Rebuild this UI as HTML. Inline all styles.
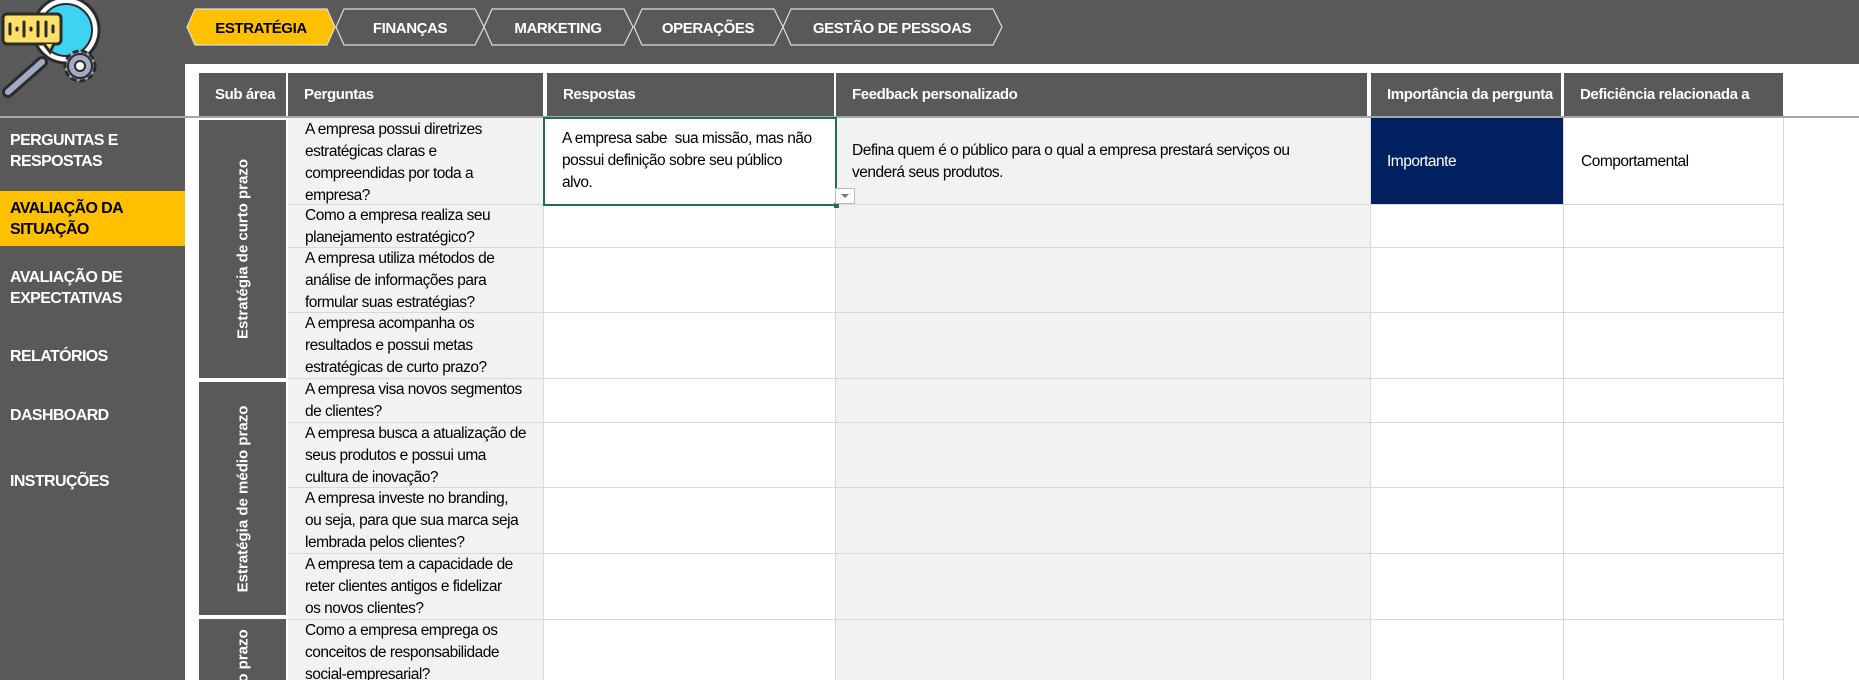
<!DOCTYPE html>
<html style="width:1859px;height:680px;overflow:hidden"><head><meta charset="utf-8"><style>
*{margin:0;padding:0;box-sizing:border-box}
html,body{width:1859px;height:680px;overflow:hidden}
body{background:#595959;position:relative;font-family:"Liberation Sans Narrow","Liberation Sans",sans-serif;}
.a{position:absolute}
.side{color:#fff;font-weight:bold;font-size:16px;line-height:21px;left:10px;font-family:"Liberation Sans",sans-serif;letter-spacing:-0.6px}
.h{background:#595959;color:#fff;font-weight:bold;font-size:15px;top:73px;height:43px;line-height:43px;padding-left:16px;font-family:"Liberation Sans",sans-serif;letter-spacing:-0.4px;white-space:nowrap;overflow:hidden}
.q{font-size:15.5px;line-height:22px;color:#000;font-family:"Liberation Sans",sans-serif;letter-spacing:-0.5px;white-space:nowrap}
.hl{position:absolute;height:1px;background:#d9d9d9}
.vl{position:absolute;width:1px;background:#d9d9d9}
.sub{background:#595959;color:#fff;font-weight:bold;font-size:15px;font-family:"Liberation Sans",sans-serif;overflow:hidden}
.sub span{position:absolute;white-space:nowrap;transform:translate(-50%,-50%) rotate(-90deg);left:50%;top:50%}
</style></head><body>
<svg class="a" style="left:0;top:0" width="110" height="100" viewBox="0 0 110 100">
<line x1="42" y1="62" x2="8" y2="92" stroke="#2b2b2b" stroke-width="12" stroke-linecap="round"/>
<line x1="42" y1="62" x2="8" y2="92" stroke="#a3a9c2" stroke-width="6" stroke-linecap="round"/>
<circle cx="66" cy="30" r="33" fill="#fff" stroke="#2b2b2b" stroke-width="3"/>
<circle cx="66" cy="30" r="26" fill="#3dd3f2" stroke="#2b2b2b" stroke-width="2"/>
<rect x="3" y="14" width="58" height="30" rx="4" fill="#ffe169" stroke="#2b2b2b" stroke-width="3"/>
<path d="M44 44 L50 52 L54 44" fill="#ffe169" stroke="#2b2b2b" stroke-width="3"/>
<g stroke="#2b2b2b" stroke-width="3" stroke-linecap="round"><line x1="10" y1="24" x2="10" y2="34"/><line x1="17" y1="28" x2="17" y2="30"/><line x1="24" y1="22" x2="24" y2="36"/><line x1="31" y1="28" x2="31" y2="30"/><line x1="38" y1="22" x2="38" y2="36"/><line x1="46" y1="22" x2="46" y2="36"/><line x1="53" y1="26" x2="53" y2="32"/></g>
<circle cx="80" cy="66" r="15" fill="#a3a9c2" stroke="#2b2b2b" stroke-width="3" stroke-dasharray="6 3"/>
<circle cx="80" cy="66" r="12" fill="#a3a9c2" stroke="#2b2b2b" stroke-width="2"/>
<circle cx="80" cy="66" r="5" fill="#fff" stroke="#2b2b2b" stroke-width="2"/>
</svg>
<svg class="a" style="left:0;top:0" width="1010" height="60">
<polygon points="195,9 327,9 335,27 327,45 195,45 187,27" fill="#ffc000" stroke="#ddd" stroke-width="1.2"/>
<polygon points="344,9 475,9 484,27 475,45 344,45 336,27" fill="none" stroke="#ddd" stroke-width="1.2"/>
<polygon points="492,9 624,9 633,27 624,45 492,45 484,27" fill="none" stroke="#ddd" stroke-width="1.2"/>
<polygon points="642,9 774,9 783,27 774,45 642,45 634,27" fill="none" stroke="#ddd" stroke-width="1.2"/>
<polygon points="791,9 993,9 1002,27 993,45 791,45 783,27" fill="none" stroke="#ddd" stroke-width="1.2"/>
<g font-family="Liberation Sans, sans-serif" font-weight="bold" font-size="15" text-anchor="middle" letter-spacing="-0.4">
<text x="261" y="33" fill="#000">ESTRATÉGIA</text>
<text x="410" y="33" fill="#fff">FINANÇAS</text>
<text x="558" y="33" fill="#fff">MARKETING</text>
<text x="708" y="33" fill="#fff">OPERAÇÕES</text>
<text x="892" y="33" fill="#fff">GESTÃO DE PESSOAS</text>
</g></svg>
<div class="a" style="left:185px;top:64px;width:1674px;height:616px;background:#fff"></div>
<div class="a" style="left:0;top:116px;width:1859px;height:2px;background:#a6a6a6"></div>
<div class="a" style="left:0;top:118px;width:185px;height:562px;background:#595959"></div>
<div class="a side" style="top:130px">PERGUNTAS E<br>RESPOSTAS</div>
<div class="a" style="left:0;top:191px;width:185px;height:55px;background:#ffc000"></div>
<div class="a side" style="top:198px;color:#000">AVALIAÇÃO DA<br>SITUAÇÃO</div>
<div class="a side" style="top:267px">AVALIAÇÃO DE<br>EXPECTATIVAS</div>
<div class="a side" style="top:346px">RELATÓRIOS</div>
<div class="a side" style="top:405px">DASHBOARD</div>
<div class="a side" style="top:471px">INSTRUÇÕES</div>
<div class="a h" style="left:199px;width:87px;padding-left:16px">Sub área</div>
<div class="a h" style="left:288px;width:255px">Perguntas</div>
<div class="a h" style="left:547px;width:287px">Respostas</div>
<div class="a h" style="left:836px;width:531px">Feedback personalizado</div>
<div class="a h" style="left:1371px;width:190px;padding-left:16px">Importância da pergunta</div>
<div class="a h" style="left:1564px;width:219px">Deficiência relacionada a</div>
<div class="a" style="left:288px;top:118px;width:255px;height:562px;background:#f2f2f2"></div>
<div class="a" style="left:836px;top:118px;width:534px;height:562px;background:#f2f2f2"></div>
<div class="hl" style="left:288px;width:1495px;top:204px"></div>
<div class="hl" style="left:288px;width:1495px;top:247px"></div>
<div class="hl" style="left:288px;width:1495px;top:312px"></div>
<div class="hl" style="left:288px;width:1495px;top:378px"></div>
<div class="hl" style="left:288px;width:1495px;top:422px"></div>
<div class="hl" style="left:288px;width:1495px;top:487px"></div>
<div class="hl" style="left:288px;width:1495px;top:553px"></div>
<div class="hl" style="left:288px;width:1495px;top:619px"></div>
<div class="vl" style="left:543px;top:118px;height:562px"></div>
<div class="vl" style="left:835px;top:118px;height:562px"></div>
<div class="vl" style="left:1370px;top:118px;height:562px"></div>
<div class="vl" style="left:1563px;top:118px;height:562px"></div>
<div class="vl" style="left:1783px;top:118px;height:562px"></div>
<div class="a sub" style="left:199px;top:120px;width:87px;height:258px"><span>Estratégia de curto prazo</span></div>
<div class="a sub" style="left:199px;top:382px;width:87px;height:233px"><span>Estratégia de médio prazo</span></div>
<div class="a sub" style="left:199px;top:619px;width:87px;height:61px"><span style="top:102px">Estratégia de longo prazo</span></div>
<div class="a q" style="left:305px;top:119px">A empresa possui diretrizes<br>estratégicas claras e<br>compreendidas por toda a<br>empresa?</div>
<div class="a q" style="left:305px;top:205px">Como a empresa realiza seu<br>planejamento estratégico?</div>
<div class="a q" style="left:305px;top:248px">A empresa utiliza métodos de<br>análise de informações para<br>formular suas estratégias?</div>
<div class="a q" style="left:305px;top:313px">A empresa acompanha os<br>resultados e possui metas<br>estratégicas de curto prazo?</div>
<div class="a q" style="left:305px;top:379px">A empresa visa novos segmentos<br>de clientes?</div>
<div class="a q" style="left:305px;top:423px">A empresa busca a atualização de<br>seus produtos e possui uma<br>cultura de inovação?</div>
<div class="a q" style="left:305px;top:488px">A empresa investe no branding,<br>ou seja, para que sua marca seja<br>lembrada pelos clientes?</div>
<div class="a q" style="left:305px;top:554px">A empresa tem a capacidade de<br>reter clientes antigos e fidelizar<br>os novos clientes?</div>
<div class="a q" style="left:305px;top:620px">Como a empresa emprega os<br>conceitos de responsabilidade<br>social-empresarial?</div>
<div class="a" style="left:543px;top:117px;width:294px;height:89px;border:2px solid #217346;background:#fff"></div>
<div class="a" style="left:834px;top:203px;width:5px;height:5px;background:#217346"></div>
<div class="a q" style="left:562px;top:128px">A empresa sabe &nbsp;sua missão, mas não<br>possui definição sobre seu público<br>alvo.</div>
<div class="a" style="left:835px;top:188px;width:20px;height:16px;background:#fff;border:1px solid #bbb"></div>
<div class="a" style="left:841px;top:194px;width:0;height:0;border-left:4px solid transparent;border-right:4px solid transparent;border-top:4px solid #777"></div>
<div class="a q" style="left:852px;top:140px">Defina quem é o público para o qual a empresa prestará serviços ou<br>venderá seus produtos.</div>
<div class="a" style="left:1371px;top:118px;width:192px;height:86px;background:#002060"></div>
<div class="a q" style="left:1387px;top:151px;color:#fff">Importante</div>
<div class="a q" style="left:1581px;top:151px">Comportamental</div>
</body></html>
